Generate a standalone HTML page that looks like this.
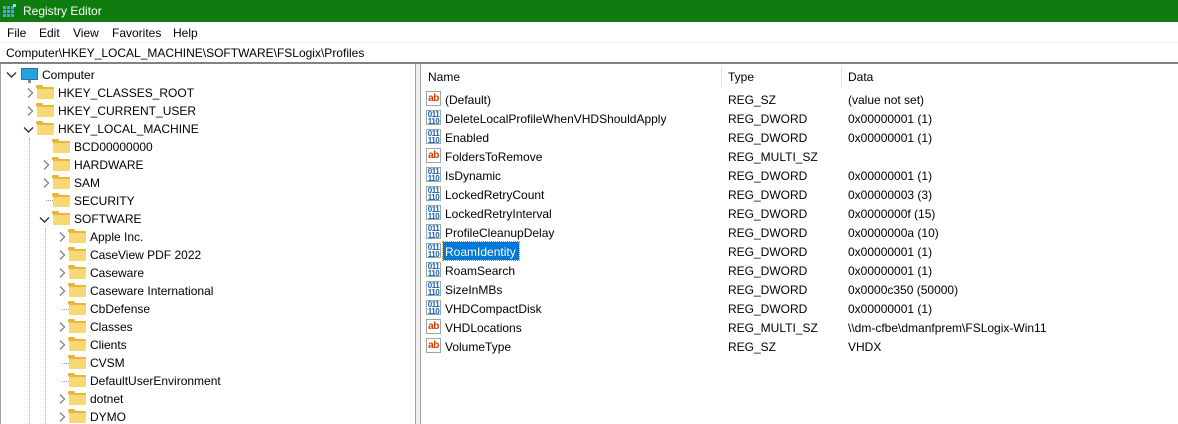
<!DOCTYPE html>
<html><head><style>
*{margin:0;padding:0;box-sizing:border-box}
body{width:1178px;height:424px;overflow:hidden;background:#fff;font-family:"Liberation Sans",sans-serif;font-size:12px;color:#000;position:relative}
.a{position:absolute;white-space:nowrap}
.fold{position:absolute;width:17px;height:12px;background:#f8d775;border-top:2px solid #e8b63a;border-radius:1px}
.fold:before{content:"";position:absolute;left:-1px;top:-4px;width:7px;height:3px;background:#e8b63a;border-radius:1px 1px 0 0}
.chev{position:absolute}
.ic{position:absolute;width:15px;height:15px;border:1px solid #9aa;background:#fff;font-size:8px;font-weight:bold;line-height:7px;text-align:center;letter-spacing:-0.5px}
.ab{color:#d83b01;font-size:10px;line-height:13px}
.bin{color:#1e5fb4;padding-top:0}
.dot{position:absolute;border-left:1px dotted #aaa}
</style></head><body>
<div class="a" style="left:0;top:0;width:1178px;height:22px;background:#107c10"></div>
<svg class="a" style="left:3px;top:4px" width="14" height="14"><g fill="#4aa6f2"><rect x="0" y="2" width="3" height="3"/><rect x="4" y="2" width="3" height="3"/><rect x="8" y="2" width="3" height="3"/><rect x="0" y="6" width="3" height="3"/><rect x="4" y="6" width="3" height="3"/><rect x="8" y="6" width="3" height="3"/><rect x="0" y="10" width="3" height="3"/><rect x="4" y="10" width="3" height="3"/><rect x="8" y="10" width="3" height="3"/></g><rect x="10" y="0" width="3" height="3" fill="#9ad0ff"/></svg>
<div class="a" style="left:23px;top:4px;color:#fff;font-size:12px">Registry Editor</div>
<div class="a" style="left:7px;top:26px">File</div>
<div class="a" style="left:39px;top:26px">Edit</div>
<div class="a" style="left:73px;top:26px">View</div>
<div class="a" style="left:112px;top:26px">Favorites</div>
<div class="a" style="left:173px;top:26px">Help</div>
<div class="a" style="left:0;top:42px;width:1178px;height:1px;background:#f0f0f0"></div>
<div class="a" style="left:6px;top:46px">Computer\HKEY_LOCAL_MACHINE\SOFTWARE\FSLogix\Profiles</div>
<div class="a" style="left:0;top:62px;width:1178px;height:2px;background:#828282"></div>
<div class="a" style="left:415px;top:64px;width:1px;height:360px;background:#a0a0a0"></div>
<div class="a" style="left:416px;top:64px;width:4px;height:360px;background:#f0f0f0"></div>
<div class="a" style="left:420px;top:64px;width:1px;height:360px;background:#a0a0a0"></div>
<div class="a" style="left:0;top:64px;width:1px;height:360px;background:#a0a0a0"></div>
<div class="dot" style="left:29px;top:138px;height:286px"></div>
<div class="dot" style="left:45px;top:228px;height:196px"></div>
<div class="dot" style="left:46px;top:200px;width:7px;height:0;border-left:0;border-top:1px dotted #999"></div>
<div class="dot" style="left:62px;top:309px;width:7px;height:0;border-left:0;border-top:1px dotted #999"></div>
<div class="dot" style="left:62px;top:363px;width:7px;height:0;border-left:0;border-top:1px dotted #999"></div>
<div class="dot" style="left:62px;top:381px;width:7px;height:0;border-left:0;border-top:1px dotted #999"></div>
<svg class="chev" style="left:6px;top:71px" width="12" height="8"><polyline points="1,1.5 5.5,6 10,1.5" fill="none" stroke="#333" stroke-width="1.4"/></svg>
<div class="a" style="left:21px;top:68px;width:17px;height:12px;background:#29a1e0;border:1px solid #1a79b0"></div>
<div class="a" style="left:28px;top:80px;width:3px;height:3px;background:#888"></div>
<div class="a" style="left:42px;top:68px">Computer</div>
<div id="tree"></div>
<div class="a" style="left:428px;top:70px">Name</div>
<div class="a" style="left:721px;top:66px;width:1px;height:22px;background:#e5e5e5"></div>
<div class="a" style="left:728px;top:70px">Type</div>
<div class="a" style="left:841px;top:66px;width:1px;height:22px;background:#e5e5e5"></div>
<div class="a" style="left:848px;top:70px">Data</div>
<div class="a" style="left:443px;top:242px;width:76px;height:18px;background:#0078d7;outline:1px dotted #e08a00"></div>
<div id="vals"></div>
<script>
var t=[[1,1,"HKEY_CLASSES_ROOT"],[1,1,"HKEY_CURRENT_USER"],[1,2,"HKEY_LOCAL_MACHINE"],[2,0,"BCD00000000"],[2,1,"HARDWARE"],[2,1,"SAM"],[2,0,"SECURITY"],[2,2,"SOFTWARE"],[3,1,"Apple Inc."],[3,1,"CaseView PDF 2022"],[3,1,"Caseware"],[3,1,"Caseware International"],[3,0,"CbDefense"],[3,1,"Classes"],[3,1,"Clients"],[3,0,"CVSM"],[3,0,"DefaultUserEnvironment"],[3,1,"dotnet"],[3,1,"DYMO"]];
var h="";t.forEach(function(r,i){var y=83+18*i,lv=r[0];var base=[0,26,42,58][lv];var fx=base+11,tx=base+32;
if(r[1]==1)h+='<svg class="chev" style="left:'+(base)+'px;top:'+(y+4)+'px" width="8" height="12"><polyline points="2,1.5 6.5,6 2,10.5" fill="none" stroke="#888" stroke-width="1.4"/></svg>';
if(r[1]==2)h+='<svg class="chev" style="left:'+(base-3)+'px;top:'+(y+7)+'px" width="12" height="8"><polyline points="1,1.5 5.5,6 10,1.5" fill="none" stroke="#333" stroke-width="1.4"/></svg>';
h+='<div class="fold" style="left:'+fx+'px;top:'+(y+4)+'px"></div><div class="a" style="left:'+tx+'px;top:'+(y+3)+'px">'+r[2]+'</div>';});
document.getElementById("tree").innerHTML=h;
var v=[["ab","(Default)","REG_SZ","(value not set)"],["b","DeleteLocalProfileWhenVHDShouldApply","REG_DWORD","0x00000001 (1)"],["b","Enabled","REG_DWORD","0x00000001 (1)"],["ab","FoldersToRemove","REG_MULTI_SZ",""],["b","IsDynamic","REG_DWORD","0x00000001 (1)"],["b","LockedRetryCount","REG_DWORD","0x00000003 (3)"],["b","LockedRetryInterval","REG_DWORD","0x0000000f (15)"],["b","ProfileCleanupDelay","REG_DWORD","0x0000000a (10)"],["b","RoamIdentity","REG_DWORD","0x00000001 (1)"],["b","RoamSearch","REG_DWORD","0x00000001 (1)"],["b","SizeInMBs","REG_DWORD","0x0000c350 (50000)"],["b","VHDCompactDisk","REG_DWORD","0x00000001 (1)"],["ab","VHDLocations","REG_MULTI_SZ","\\\\dm-cfbe\\dmanfprem\\FSLogix-Win11"],["ab","VolumeType","REG_SZ","VHDX"]];
h="";v.forEach(function(r,i){var y=90+19*i;
h+=r[0]=="ab"?'<div class="ic ab" style="left:426px;top:'+(y+1)+'px">ab</div>':'<div class="ic bin" style="left:426px;top:'+(y+1)+'px">011<br>110</div>';
h+='<div class="a" style="left:445px;top:'+(y+3)+'px;'+(i==8?'color:#fff':'')+'">'+r[1]+'</div><div class="a" style="left:728px;top:'+(y+3)+'px">'+r[2]+'</div><div class="a" style="left:848px;top:'+(y+3)+'px">'+r[3]+'</div>';});
document.getElementById("vals").innerHTML=h;
</script>
</body></html>
